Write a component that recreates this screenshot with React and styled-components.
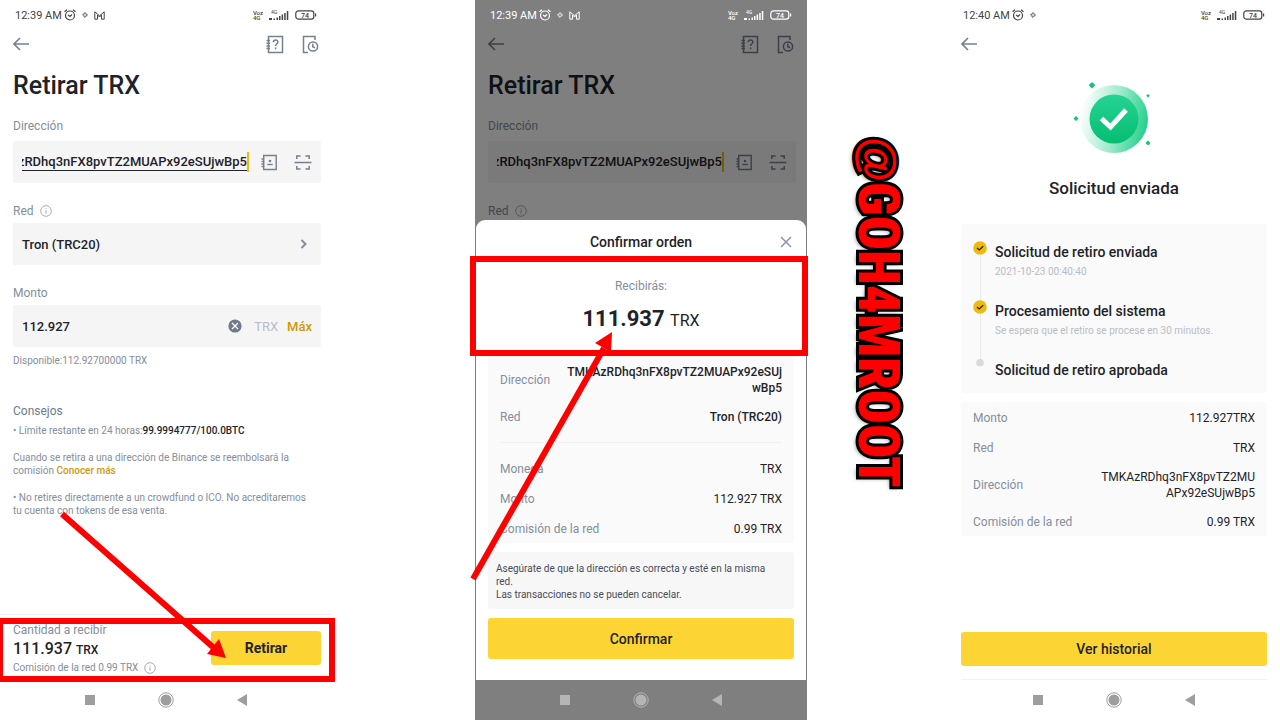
import { useId } from "react";
import styled, { createGlobalStyle, ThemeProvider } from "styled-components";

const theme = {
  text: "#1e2329",
  textSoft: "#848e9c",
  textMuted: "#b7bdc6",
  field: "#f5f5f5",
  card: "#fafafa",
  yellow: "#fcd535",
  gold: "#d0980b",
  red: "#ff0000",
};

const ADDRESS = "TMKAzRDhq3nFX8pvTZ2MUAPx92eSUjwBp5";

const GlobalStyle = createGlobalStyle`
  * {
    box-sizing: border-box;
  }
  body {
    margin: 0;
    background: #fff;
    font-family: Roboto, "Liberation Sans", sans-serif;
  }
  button, input {
    font: inherit;
    color: inherit;
    border: none;
    padding: 0;
    margin: 0;
    background: none;
  }
  h1, h2, h3, p, ol, dl, dd {
    margin: 0;
    padding: 0;
  }
  svg {
    display: block;
    flex: none;
  }
`;

const Page = styled.main`
  display: grid;
  grid-template-columns: 332fr 143fr 332fr 141fr 332fr;
  min-height: 100vh;
  color: ${({ theme }) => theme.text};
`;

const Phone = styled.section`
  position: relative;
  grid-column: ${(props) => props.$column};
  display: flex;
  flex-direction: column;
  min-width: 0;
`;

const Scrim = styled.div`
  position: absolute;
  inset: 0;
  background: rgba(0, 0, 0, 0.5);
  pointer-events: none;
`;

const StatusRow = styled.div`
  position: relative;
  z-index: 1;
  display: flex;
  align-items: center;
  gap: 6px;
  height: 30px;
  padding: 0 15px;
  color: ${(props) => (props.$light ? "#fff" : "#444")};
`;

const Clock = styled.span`
  font-size: 11px;
  margin-right: -4px;
`;

const Carrier = styled.span`
  margin-left: auto;
  font-size: 6px;
  font-weight: 500;
  line-height: 5px;
`;

const Toolbar = styled.div`
  display: flex;
  align-items: center;
  gap: 17px;
  height: 28px;
  padding: 0 13px;
`;

const IconButton = styled.button`
  display: flex;
  color: #76808f;
  cursor: pointer;
  &:first-child {
    margin-right: auto;
  }
`;

const Content = styled.div`
  display: flex;
  flex-direction: column;
  padding: 12px 11px 0 13px;
`;

const Title = styled.h1`
  && {
    margin-bottom: 14px;
  }
  font-size: 25px;
  font-weight: 500;
  line-height: 32px;
`;

const Label = styled.label`
  display: flex;
  align-items: center;
  gap: 6px;
  font-size: 12px;
  line-height: 20px;
  margin-bottom: ${(props) => (props.$roomy ? "5px" : "2px")};
  color: ${({ theme }) => theme.textSoft};
`;

const Field = styled.div`
  display: flex;
  align-items: center;
  height: 42px;
  margin-bottom: 18px;
  padding: 0 9px;
  border-radius: 2px;
  background: ${({ theme }) => theme.field};
`;

const AddressInput = styled.input`
  flex: 1;
  min-width: 0;
  height: 17px;
  direction: rtl;
  font-size: 13px;
  font-weight: 500;
  border-bottom: 1px solid ${(props) => (props.$editing ? "#1e2329" : "transparent")};
  outline: none;
`;

const Caret = styled.span`
  width: 2px;
  height: 20px;
  margin-right: 12px;
  background: #f0b90b;
`;

const AddressIcons = styled.span`
  display: flex;
  gap: 16px;
  color: #76808f;
`;

const SelectButton = styled.button`
  display: flex;
  flex: 1;
  align-items: center;
  justify-content: space-between;
  padding-right: 4px;
  font-size: 13px;
  font-weight: 500;
`;

const AmountInput = styled.input`
  flex: 1;
  min-width: 0;
  font-size: 13px;
  font-weight: 500;
  outline: none;
`;

const Unit = styled.span`
  margin: 0 9px 0 12px;
  font-size: 13px;
  color: ${({ theme }) => theme.textMuted};
`;

const MaxButton = styled.button`
  font-size: 13px;
  font-weight: 500;
  color: ${({ theme }) => theme.gold};
`;

const Available = styled.p`
  && {
    margin: -11px 0 34px;
  }
  font-size: 10px;
  line-height: 14px;
  color: ${({ theme }) => theme.textSoft};
`;

const Tips = styled.div`
  display: flex;
  flex-direction: column;
  gap: 14px;
  font-size: 10px;
  line-height: 13px;
  color: ${({ theme }) => theme.textSoft};
  strong {
    font-weight: 500;
    color: ${({ theme }) => theme.text};
  }
  a {
    color: ${({ theme }) => theme.gold};
    font-weight: 500;
    text-decoration: none;
  }
`;

const TipsTitle = styled.h2`
  && {
    margin-bottom: 4px;
  }
  font-size: 12px;
  font-weight: 400;
  line-height: 18px;
  color: #707a8a;
`;

const Footer = styled.div`
  position: relative;
  display: flex;
  align-items: center;
  justify-content: space-between;
  height: 66px;
  margin-top: auto;
  padding: 1px 11px 0 13px;
  border-top: 1px solid #f2f2f2;
`;

const Soft = styled.p`
  display: flex;
  align-items: center;
  gap: 6px;
  font-size: ${(props) => (props.$small ? "10px" : "12px")};
  line-height: ${(props) => (props.$small ? "16px" : "18px")};
  color: ${({ theme }) => theme.textSoft};
`;

const Total = styled.p`
  font-size: ${(props) => (props.$large ? "22px" : "16px")};
  font-weight: ${(props) => (props.$large ? "700" : "500")};
  line-height: ${(props) => (props.$large ? "32px" : "20px")};
  span {
    font-size: ${(props) => (props.$large ? "16px" : "12px")};
    font-weight: ${(props) => (props.$large ? "400" : "500")};
  }
`;

const PrimaryButton = styled.button`
  && {
    margin: ${(props) => props.$margin || "0 13px"};
  }
  height: ${(props) => (props.$tall ? "41px" : "34px")};
  width: ${(props) => (props.$compact ? "110px" : "auto")};
  border-radius: 3px;
  background: ${({ theme }) => theme.yellow};
  font-size: 14px;
  font-weight: ${(props) => (props.$compact ? "700" : "500")};
  cursor: pointer;
`;

const Highlight = styled.div`
  position: absolute;
  inset: ${(props) => props.$inset};
  border: 6px solid ${({ theme }) => theme.red};
  pointer-events: none;
`;

const ArrowLayer = styled.svg`
  position: absolute;
  left: 0;
  top: 0;
  z-index: 3;
  overflow: visible;
  pointer-events: none;
`;

const NavBar = styled.div`
  position: relative;
  z-index: 1;
  display: flex;
  align-items: center;
  justify-content: center;
  gap: 62px;
  height: 40px;
  color: ${(props) => (props.$light ? "#b5b5b5" : "#9e9e9e")};
`;

const Sheet = styled.div`
  position: relative;
  z-index: 2;
  display: flex;
  flex-direction: column;
  flex: 1;
  margin: -3px 1px 0;
  padding-bottom: 21px;
  border-radius: 9px 9px 0 0;
  background: #fff;
`;

const SheetHeader = styled.div`
  display: grid;
  grid-template-columns: 1fr auto 1fr;
  align-items: center;
  height: 44px;
  padding: 0 13px;
  h2 {
    grid-column: 2;
    font-size: 14px;
    font-weight: 500;
  }
  ${IconButton} {
    justify-self: end;
    margin: 0;
  }
`;

const Receive = styled.div`
  position: relative;
  display: flex;
  flex-direction: column;
  align-items: center;
  height: 88px;
  padding-top: 13px;
  gap: 8px;
`;

const Card = styled.dl`
  && {
    margin: ${(props) => (props.$inSheet ? "0 12px 9px" : "0 13px")};
    padding: ${(props) => (props.$inSheet ? "12px 12px 5px" : "7px 12px 5px")};
  }
  display: flex;
  flex-direction: column;
  gap: 12px;
  border-radius: 3px;
  background: ${({ theme }) => theme.card};
  font-size: 12px;
`;

const Row = styled.div`
  display: flex;
  align-items: center;
  justify-content: space-between;
  line-height: ${(props) => (props.$wrap ? "16px" : "18px")};
  dt {
    color: ${({ theme }) => theme.textSoft};
  }
  dd {
    max-width: ${(props) => (props.$narrow ? "156px" : "216px")};
    text-align: right;
    word-break: break-all;
    font-weight: ${(props) => (props.$strong ? "500" : "400")};
  }
`;

const Rule = styled.hr`
  width: 100%;
  height: 1px;
  margin: 4px 0 5px;
  border: none;
  background: #f0f0f0;
`;

const Warning = styled.p`
  && {
    margin: 0 12px 9px;
    padding: 10px 8px 8px;
  }
  border-radius: 3px;
  background: #f7f7f7;
  font-size: 10px;
  line-height: 13px;
  color: #474d57;
`;

const Result = styled.div`
  display: flex;
  flex-direction: column;
  align-items: center;
  gap: 20px;
  padding: 20px 0 24px;
  h1 {
    font-size: 17px;
    font-weight: 500;
    line-height: 24px;
  }
`;

const Steps = styled.ol`
  && {
    margin: 0 13px 9px;
    padding: 17px 12px 0;
  }
  height: 169px;
  list-style: none;
  border-radius: 3px;
  background: ${({ theme }) => theme.card};
`;

const Step = styled.li`
  display: flex;
  gap: 8px;
  height: 59px;
  h3 {
    padding-top: 1px;
    font-size: 14px;
    font-weight: 500;
    line-height: 20px;
  }
  p {
    font-size: 10px;
    line-height: 20px;
    color: ${({ theme }) => theme.textMuted};
  }
`;

const Track = styled.div`
  display: flex;
  flex-direction: column;
  align-items: center;
  width: 14px;
  &::after {
    content: "";
    width: 1px;
    flex: 1;
    background: ${(props) => (props.$last ? "transparent" : "#e8eaed")};
  }
`;

const Bottom = styled.div`
  display: flex;
  flex-direction: column;
  margin-top: auto;
`;

const BottomRule = styled.hr`
  width: calc(100% - 26px);
  height: 1px;
  margin: 13px 13px 0;
  border: none;
  background: #f2f2f2;
`;

const Signature = styled.div`
  grid-column: 4;
  display: flex;
  align-items: center;
  justify-content: center;
  padding-bottom: 96px;
  writing-mode: vertical-rl;
  font-family: "Liberation Sans Narrow", "Roboto Condensed", "DejaVu Sans Condensed", Roboto, sans-serif;
  font-size: 57px;
  font-weight: 900;
  line-height: 70px;
  color: ${({ theme }) => theme.red};
  -webkit-text-stroke: 6px #000;
  paint-order: stroke fill;
  text-shadow: 2px 3px 4px rgba(0, 0, 0, 0.4);
  white-space: nowrap;
`;

const AtSign = styled.span`
  font-family: "Liberation Sans", sans-serif;
  font-size: 46px;
  font-weight: 700;
`;

const BackIcon = () => (
  <svg width="18" height="16" viewBox="0 0 18 16" fill="none" stroke="currentColor" strokeWidth="1.6">
    <path d="M7 2 1 8l6 6M1.3 8H16" />
  </svg>
);

const HelpIcon = () => (
  <svg width="19" height="19" viewBox="0 0 19 19" fill="none" stroke="currentColor" strokeWidth="1.5">
    <path d="M3.500 1.500h14v16h-14zM1.500 5.500h3.500M1.500 8.200h3.500M1.500 10.900h3.500M1.500 13.600h3.500" />
    <path d="M8.300 7.300c0-3 4.600-3 4.600-.2 0 1.700-2.300 1.700-2.300 3.900M10.600 12.500v1.700" />
  </svg>
);

const HistoryIcon = () => (
  <svg width="18" height="19" viewBox="0 0 18 19" fill="none" stroke="currentColor" strokeWidth="1.5">
    <path d="M7 17.500H2.500v-16h11.500V5" />
    <circle cx="12" cy="11.500" r="4.600" />
    <path d="M11.800 8.700v3l2.200 1" />
  </svg>
);

const ContactsIcon = () => (
  <svg width="17" height="17" viewBox="0 0 17 17" fill="none" stroke="currentColor" strokeWidth="1.400">
    <path d="M2.700 1.500h12.500v14H2.700zM.5 5h3M.5 7.500h3M.5 10h3M.5 12.500h3" />
    <path d="M6.300 10.500h5.400" />
    <circle cx="9" cy="7" r="1.300" fill="currentColor" stroke="none" />
  </svg>
);

const ScanIcon = () => (
  <svg width="18" height="17" viewBox="0 0 18 17" fill="none" stroke="currentColor" strokeWidth="1.500">
    <path d="M2.800 5V2h3.700M11.500 2h3.700v3M2.800 12v3h3.700M11.500 15h3.700v-3M.5 8.500h17" />
  </svg>
);

const InfoIcon = () => (
  <svg width="12" height="12" viewBox="0 0 12 12" fill="none" stroke="#a5adb8">
    <circle cx="6" cy="6" r="5.300" />
    <path d="M6 5.200v3.600M6 3.200v1.100" />
  </svg>
);

const ChevronIcon = () => (
  <svg width="8" height="12" viewBox="0 0 8 12" fill="none" stroke="#848e9c" strokeWidth="2">
    <path d="m1.500 2 4 4-4 4" />
  </svg>
);

const ClearIcon = () => (
  <svg width="14" height="14" viewBox="0 0 14 14">
    <circle cx="7" cy="7" r="6.600" fill="#707a8a" />
    <path d="m4 4 6 6m0-6-6 6" stroke="#fff" strokeWidth="1.300" />
  </svg>
);

const CloseIcon = () => (
  <svg width="14" height="14" viewBox="0 0 14 14" fill="none" stroke="#848e9c" strokeWidth="1.400">
    <path d="m2 2 10 10m0-10L2 12" />
  </svg>
);

const AlarmIcon = () => (
  <svg width="12" height="12" viewBox="0 0 12 12" fill="none" stroke="currentColor" strokeWidth="1.200">
    <circle cx="6" cy="6.500" r="4.500" />
    <path d="M.5 2.700 3 .8M11.500 2.700 9 .8M4 6l2 1.500L8 5.500" />
  </svg>
);

const TokenIcon = () => (
  <svg width="6" height="6" viewBox="0 0 6 6" fill="none" stroke="currentColor" strokeWidth="1">
    <path d="M3 .6 5.400 3 3 5.400.6 3zM3 2.500v1" />
  </svg>
);

const MailIcon = () => (
  <svg width="11" height="9" viewBox="0 0 11 9" fill="none" stroke="currentColor">
    <path d="M.8 8.200V.8l4.700 4L10.200.8v7.400H7.500V4L5.500 6l-2-2v4.200z" />
  </svg>
);

const SignalIcon = () => (
  <svg width="20" height="12" viewBox="0 0 20 12" fill="currentColor">
    <path d="M0 9h3v2H0zM4.500 9.500h1.500V11H4.500zM7.500 8.500H9V11H7.500zM10 7h1.500v4H10zM12.600 5.500h1.500V11h-1.500zM15.200 4h1.500v7h-1.500zM17.800 2h1.500v9h-1.500z" />
    <text x="2" y="5" fontSize="5">4G</text>
  </svg>
);

const BatteryIcon = () => (
  <svg width="22" height="10" viewBox="0 0 22 10" fill="none" stroke="currentColor" strokeWidth="1.200">
    <rect x=".8" y=".8" width="18" height="8.400" rx="2.600" />
    <path d="M20.600 3.500v3" />
    <text x="6" y="7.500" fontSize="7" fontWeight="500" fill="currentColor" stroke="none">74</text>
  </svg>
);

const StepCheck = () => (
  <svg width="14" height="14" viewBox="0 0 14 14">
    <circle cx="7" cy="7" r="6.800" fill="#f0b90b" />
    <path d="m4 7 2.200 2L10.200 5.200" fill="none" stroke="#1e2329" strokeWidth="1.200" />
  </svg>
);

const StepDot = () => (
  <svg width="14" height="14" viewBox="0 0 14 14">
    <circle cx="7" cy="3.800" r="3.800" fill="#d8dade" />
  </svg>
);

const SuccessBadge = () => (
  <svg width="84" height="78" viewBox="0 0 84 78">
    <defs>
      <linearGradient id="halo" x1="0" y1="0.4" x2="1" y2="0.6">
        <stop offset="0" stopColor="#fff" />
        <stop offset="0.5" stopColor="#a3ebcf" />
        <stop offset="1" stopColor="#20cf8c" />
      </linearGradient>
      <linearGradient id="disc" x1="0" y1="0" x2="0" y2="1">
        <stop offset="0" stopColor="#26d392" />
        <stop offset="1" stopColor="#06bd72" />
      </linearGradient>
    </defs>
    <circle cx="42" cy="41" r="34" fill="url(#halo)" />
    <circle cx="42" cy="41" r="24.500" fill="url(#disc)" />
    <path d="m29.500 40.500 9 8.500 15.500-17" fill="none" stroke="#fff" strokeWidth="5" />
    <path
      d="m20 4 3.300 3.300L20 10.600l-3.300-3.300zM76 16l1.800 1.800L76 19.600l-1.800-1.800zM4 38l2.500 2.500L4 43l-2.500-2.500zM76 62.500l2.500 2.500-2.500 2.500-2.500-2.500z"
      fill="#0ec67e"
    />
  </svg>
);

const StatusBar = ({ time, mail, light }) => (
  <StatusRow $light={light}>
    <Clock>{time}</Clock>
    <AlarmIcon />
    <TokenIcon />
    {mail && <MailIcon />}
    <Carrier>
      Voz
      <br />
      4G
    </Carrier>
    <SignalIcon />
    <BatteryIcon />
  </StatusRow>
);

const SystemNav = ({ light }) => (
  <NavBar $light={light}>
    <svg width="12" height="12" viewBox="0 0 12 12" fill="currentColor">
      <path d="M1 1h10v10H1z" />
    </svg>
    <svg width="16" height="16" viewBox="0 0 16 16">
      <circle cx="8" cy="8" r="7.200" fill="none" stroke="currentColor" />
      <circle cx="8" cy="8" r="5.500" fill="currentColor" />
    </svg>
    <svg width="12" height="12" viewBox="0 0 12 12" fill="currentColor">
      <path d="M11 0v12L1 6z" />
    </svg>
  </NavBar>
);

const WithdrawToolbar = () => (
  <Toolbar>
    <IconButton aria-label="Volver">
      <BackIcon />
    </IconButton>
    <IconButton aria-label="Ayuda">
      <HelpIcon />
    </IconButton>
    <IconButton aria-label="Historial">
      <HistoryIcon />
    </IconButton>
  </Toolbar>
);

const AddressField = ({ editing }) => {
  const id = useId();
  return (
    <>
      <Label htmlFor={id} $roomy>
        Dirección
      </Label>
      <Field>
        <AddressInput id={id} $editing={editing} defaultValue={ADDRESS} />
        <Caret />
        <AddressIcons>
          <ContactsIcon />
          <ScanIcon />
        </AddressIcons>
      </Field>
    </>
  );
};

const WithdrawScreen = () => (
  <Phone $column={1}>
    <StatusBar time="12:39 AM" mail />
    <WithdrawToolbar />
    <Content>
      <Title>Retirar TRX</Title>
      <AddressField editing />
      <Label htmlFor="network">
        Red <InfoIcon />
      </Label>
      <Field>
        <SelectButton id="network">
          Tron (TRC20) <ChevronIcon />
        </SelectButton>
      </Field>
      <Label htmlFor="amount">Monto</Label>
      <Field>
        <AmountInput id="amount" defaultValue="112.927" />
        <button aria-label="Borrar">
          <ClearIcon />
        </button>
        <Unit>TRX</Unit>
        <MaxButton>Máx</MaxButton>
      </Field>
      <Available>Disponible:112.92700000 TRX</Available>
      <TipsTitle>Consejos</TipsTitle>
      <Tips>
        <p>
          • Límite restante en 24 horas:<strong>99.9994777/100.0BTC</strong>
        </p>
        <p>
          Cuando se retira a una dirección de Binance se reembolsará la
          <br />
          comisión <a href="#fees">Conocer más</a>
        </p>
        <p>
          • No retires directamente a un crowdfund o ICO. No acreditaremos
          <br />
          tu cuenta con tokens de esa venta.
        </p>
      </Tips>
    </Content>
    <Footer>
      <div>
        <Soft>Cantidad a recibir</Soft>
        <Total>
          111.937 <span>TRX</span>
        </Total>
        <Soft $small>
          Comisión de la red 0.99 TRX <InfoIcon />
        </Soft>
      </div>
      <PrimaryButton $compact $margin="0">
        Retirar
      </PrimaryButton>
      <Highlight $inset="3px -3px -2px -3px" />
    </Footer>
    <SystemNav />
    <ArrowLayer width="332" height="720">
      <path d="M62 514 214 648" stroke="#f00" strokeWidth="6" />
      <path d="m226 658-7-19-12 15z" fill="#f00" />
    </ArrowLayer>
  </Phone>
);

const Backdrop = () => (
  <>
    <WithdrawToolbar />
    <Content>
      <Title>Retirar TRX</Title>
      <AddressField />
      <Label as="span">
        Red <InfoIcon />
      </Label>
    </Content>
  </>
);

const ConfirmScreen = () => (
  <Phone $column={3}>
    <StatusBar time="12:39 AM" mail light />
    <Backdrop />
    <Scrim />
    <Sheet>
      <SheetHeader>
        <h2>Confirmar orden</h2>
        <IconButton aria-label="Cerrar">
          <CloseIcon />
        </IconButton>
      </SheetHeader>
      <Receive>
        <Soft>Recibirás:</Soft>
        <Total $large>
          111.937 <span>TRX</span>
        </Total>
        <Highlight $inset="-8px -2px -4px -6px" />
      </Receive>
      <Card $inSheet>
        <Row $wrap $strong>
          <dt>Dirección</dt>
          <dd>{ADDRESS}</dd>
        </Row>
        <Row $strong>
          <dt>Red</dt>
          <dd>Tron (TRC20)</dd>
        </Row>
        <Rule />
        <Row>
          <dt>Moneda</dt>
          <dd>TRX</dd>
        </Row>
        <Row>
          <dt>Monto</dt>
          <dd>112.927 TRX</dd>
        </Row>
        <Row>
          <dt>Comisión de la red</dt>
          <dd>0.99 TRX</dd>
        </Row>
      </Card>
      <Warning>
        Asegúrate de que la dirección es correcta y esté en la misma
        <br />
        red.
        <br />
        Las transacciones no se pueden cancelar.
      </Warning>
      <PrimaryButton $tall $margin="0 12px">
        Confirmar
      </PrimaryButton>
    </Sheet>
    <SystemNav light />
    <ArrowLayer width="332" height="720">
      <path d="M-2 579 129 348" stroke="#f00" strokeWidth="6" />
      <path d="m137 332-17 11 16 9z" fill="#f00" />
    </ArrowLayer>
  </Phone>
);

const SentScreen = () => (
  <Phone $column={5}>
    <StatusBar time="12:40 AM" />
    <Toolbar>
      <IconButton aria-label="Volver">
        <BackIcon />
      </IconButton>
    </Toolbar>
    <Result>
      <SuccessBadge />
      <h1>Solicitud enviada</h1>
    </Result>
    <Steps>
      <Step>
        <Track>
          <StepCheck />
        </Track>
        <div>
          <h3>Solicitud de retiro enviada</h3>
          <p>
            <time>2021-10-23 00:40:40</time>
          </p>
        </div>
      </Step>
      <Step>
        <Track>
          <StepCheck />
        </Track>
        <div>
          <h3>Procesamiento del sistema</h3>
          <p>Se espera que el retiro se procese en 30 minutos.</p>
        </div>
      </Step>
      <Step>
        <Track $last>
          <StepDot />
        </Track>
        <h3>Solicitud de retiro aprobada</h3>
      </Step>
    </Steps>
    <Card>
      <Row>
        <dt>Monto</dt>
        <dd>112.927TRX</dd>
      </Row>
      <Row>
        <dt>Red</dt>
        <dd>TRX</dd>
      </Row>
      <Row $wrap $narrow>
        <dt>Dirección</dt>
        <dd>{ADDRESS}</dd>
      </Row>
      <Row>
        <dt>Comisión de la red</dt>
        <dd>0.99 TRX</dd>
      </Row>
    </Card>
    <Bottom>
      <PrimaryButton>Ver historial</PrimaryButton>
      <BottomRule />
      <SystemNav />
    </Bottom>
  </Phone>
);

const App = () => (
  <ThemeProvider theme={theme}>
    <GlobalStyle />
    <Page>
      <WithdrawScreen />
      <ConfirmScreen />
      <Signature>
        <AtSign>@</AtSign>GOH4MROOT
      </Signature>
      <SentScreen />
    </Page>
  </ThemeProvider>
);

export default App;
